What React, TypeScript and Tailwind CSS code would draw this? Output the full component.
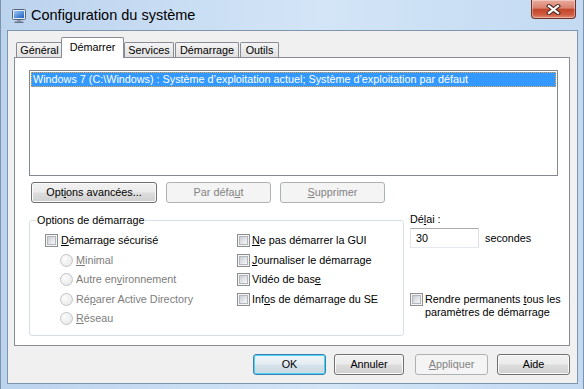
import React from 'react';

const U = ({ children }: { children: React.ReactNode }) => <span className="underline underline-offset-[1px]">{children}</span>;

const Check = () => (
  <span className="flex h-[13px] w-[13px] shrink-0 items-center justify-center border border-[#8e8f8f] bg-[#f4f4f4]">
    <span className="h-[9px] w-[9px] border border-[#b3b7bd] bg-[linear-gradient(135deg,#c9cdd3,#f8f8f8)]" />
  </span>
);

const Radio = () => (
  <span className="h-[13px] w-[13px] shrink-0 rounded-full border border-[#c2c4c6] bg-[radial-gradient(circle_at_35%_35%,#fdfdfd,#e3e4e5)]" />
);

type BtnProps = { children: React.ReactNode; className?: string; disabled?: boolean; primary?: boolean };

const Btn = ({ children, className = '', disabled, primary }: BtnProps) => {
  let look = 'border-[#707070] bg-[linear-gradient(to_bottom,#f2f2f2_0%,#ebebeb_48%,#dddddd_52%,#cfcfcf_100%)] shadow-[inset_0_0_0_1px_#fbfbfb] text-black';
  if (disabled) look = 'border-[#adb2b5] bg-[#f4f4f4] text-[#838383]';
  if (primary) look = 'border-[#3c7fb1] bg-[linear-gradient(to_bottom,#eef4f8_0%,#e6eef3_48%,#d6e2ea_52%,#cad8e2_100%)] shadow-[inset_0_0_0_1px_#48d5f8] text-black';
  return (
    <div className={`flex h-[21px] shrink-0 items-center justify-center rounded-[3px] border ${look} ${className}`}>
      {children}
    </div>
  );
};

const MonitorIcon = () => (
  <svg width="16" height="16" viewBox="0 0 16 16" className="ml-[10px] mt-[8px] shrink-0">
    <defs>
      <linearGradient id="scr" x1="0" y1="0" x2="1" y2="1">
        <stop offset="0" stopColor="#9cc8f5" />
        <stop offset="1" stopColor="#1f5fc4" />
      </linearGradient>
    </defs>
    <rect x="1.5" y="1.5" width="13" height="10" rx="1" fill="#e6e9ee" stroke="#55657c" />
    <rect x="3" y="3" width="10" height="7" fill="url(#scr)" />
    <path d="M6 12h4v1.5H6z" fill="#8a96a8" />
    <rect x="3.5" y="13.5" width="9" height="1.5" rx="0.5" fill="#66748a" />
  </svg>
);

const CloseButton = () => (
  <div className="ml-auto mr-[7px] flex h-[19px] w-[45px] shrink-0 items-center justify-center rounded-b-[4px] border border-t-0 border-[#6d3228] bg-[linear-gradient(to_bottom,#e9ab9d_0%,#d8826f_45%,#c3462c_52%,#cf5a3e_80%,#df8c74_100%)] shadow-[inset_0_0_0_1px_rgba(255,255,255,0.35)]">
    <svg width="15" height="11" viewBox="0 0 15 11">
      <path d="M3 2 L12 9 M12 2 L3 9" stroke="#4d2a24" strokeWidth="4.2" strokeLinecap="square" />
      <path d="M3 2 L12 9 M12 2 L3 9" stroke="#ffffff" strokeWidth="2.2" strokeLinecap="square" />
    </svg>
  </div>
);

const tabIdle = 'flex h-[15px] shrink-0 items-center justify-center rounded-t-[2px] border border-b-0 border-[#898c95] bg-[linear-gradient(to_bottom,#f4f4f4,#e1e1e1)]';

export default function App() {
  return (
    <div className="flex h-[389px] w-[584px] flex-col overflow-hidden border-x border-[#7d93ad] bg-[linear-gradient(to_right,#bcd3ee,#d3e5f7_55%,#c3daf2)] font-['Liberation_Sans',Arial,sans-serif] text-[10.8px] leading-[13px] text-black">
      {/* title bar */}
      <div className="flex h-[30px] shrink-0 items-start">
        <MonitorIcon />
        <span className="ml-[4px] mt-[7px] text-[14.5px] leading-[17px]">Configuration du système</span>
        <CloseButton />
      </div>

      {/* client area */}
      <div className="ml-[6px] flex h-[354px] w-[571px] flex-col border border-[#7f95ae] bg-[#f0f0f0] pl-[6px] pt-[6px]">
        {/* tabs */}
        <div className="flex h-[20px] items-end">
          <div className={`${tabIdle} ml-[2px] w-[47px]`}>Général</div>
          <div className="relative z-10 -mb-px -ml-[2px] flex h-[21px] w-[63px] shrink-0 justify-center rounded-t-[2px] border border-b-0 border-[#898c95] bg-white pt-[3px]">
            Démarrer
          </div>
          <div className={`${tabIdle} w-[50px]`}>Services</div>
          <div className={`${tabIdle} ml-[1px] w-[64px]`}>Démarrage</div>
          <div className={`${tabIdle} ml-[1px] w-[39px]`}>Outils</div>
        </div>

        {/* tab panel */}
        <div className="h-[289px] w-[556px] border border-[#898c95] bg-white pl-[14px] pt-[12px]">
          <div className="h-[106px] w-[529px] border border-[#828790] bg-white p-px">
            <div className="h-[15px] border border-dotted border-[#f3a545] bg-[#3399ff] pl-[1px] leading-[13px] whitespace-nowrap text-white">
              Windows 7 (C:\Windows) : Système d’exploitation actuel; Système d’exploitation par défaut
            </div>
          </div>

          <div className="mt-[6px] flex">
            <Btn className="ml-[2px] w-[126px]">Opt<U>i</U>ons avancées...</Btn>
            <Btn className="ml-[9px] w-[105px]" disabled>Par défa<U>u</U>t</Btn>
            <Btn className="ml-[9px] w-[105px]" disabled><U>S</U>upprimer</Btn>
          </div>

          <div className="flex items-start">
            <fieldset className="mt-[11px] h-[122px] w-[375px] shrink-0 rounded-[3px] border border-[#d5dfe5]">
              <legend className="ml-[6px] px-[1px] leading-[13px]">Options de démarrage</legend>
              <div className="mt-[4px] flex pl-[15px]">
                <div className="flex w-[192px] flex-col">
                  <div className="flex h-[19.5px] items-center">
                    <Check />
                    <span className="ml-[3px]"><U>D</U>émarrage sécurisé</span>
                  </div>
                  <div className="flex h-[19.5px] items-center pl-[15px] text-[#7d7d7d]">
                    <Radio />
                    <span className="ml-[3px]"><U>M</U>inimal</span>
                  </div>
                  <div className="flex h-[19.5px] items-center pl-[15px] text-[#7d7d7d]">
                    <Radio />
                    <span className="ml-[3px]">Autre en<U>v</U>ironnement</span>
                  </div>
                  <div className="flex h-[19.5px] items-center pl-[15px] text-[#7d7d7d]">
                    <Radio />
                    <span className="ml-[3px]">Ré<U>p</U>arer Active Directory</span>
                  </div>
                  <div className="flex h-[19.5px] items-center pl-[15px] text-[#7d7d7d]">
                    <Radio />
                    <span className="ml-[3px]"><U>R</U>éseau</span>
                  </div>
                </div>
                <div className="flex flex-col">
                  <div className="flex h-[19.5px] items-center">
                    <Check />
                    <span className="ml-[2px]"><U>N</U>e pas démarrer la GUI</span>
                  </div>
                  <div className="flex h-[19.5px] items-center">
                    <Check />
                    <span className="ml-[2px]"><U>J</U>ournaliser le démarrage</span>
                  </div>
                  <div className="flex h-[19.5px] items-center">
                    <Check />
                    <span className="ml-[2px]">Vidéo de bas<U>e</U></span>
                  </div>
                  <div className="flex h-[19.5px] items-center">
                    <Check />
                    <span className="ml-[2px]">Inf<U>o</U>s de démarrage du SE</span>
                  </div>
                </div>
              </div>
            </fieldset>

            <div className="ml-[6px] mt-[10px] flex flex-col">
              <span>Dé<U>l</U>ai :</span>
              <div className="mt-[2px] flex items-center">
                <div className="flex h-[20px] w-[69px] items-center border border-[#abadb3] border-b-[#e3e9ef] border-l-[#e2e3ea] border-r-[#dbdfe6] bg-white pl-[5px]">
                  30
                </div>
                <span className="ml-[6px]">secondes</span>
              </div>
              <div className="mt-[45px] flex items-start">
                <Check />
                <span className="ml-[2px] leading-[13px]">
                  Rendre permanents <U>t</U>ous les
                  <br />
                  paramètres de démarrage
                </span>
              </div>
            </div>
          </div>
        </div>

        {/* dialog buttons */}
        <div className="mt-[8px] flex w-[556px] justify-end">
          <Btn className="w-[73px]" primary>OK</Btn>
          <Btn className="ml-[8px] w-[70px]">Annuler</Btn>
          <Btn className="ml-[11px] w-[73px]" disabled><U>A</U>ppliquer</Btn>
          <Btn className="ml-[9px] w-[73px]">Aide</Btn>
        </div>
      </div>
    </div>
  );
}
